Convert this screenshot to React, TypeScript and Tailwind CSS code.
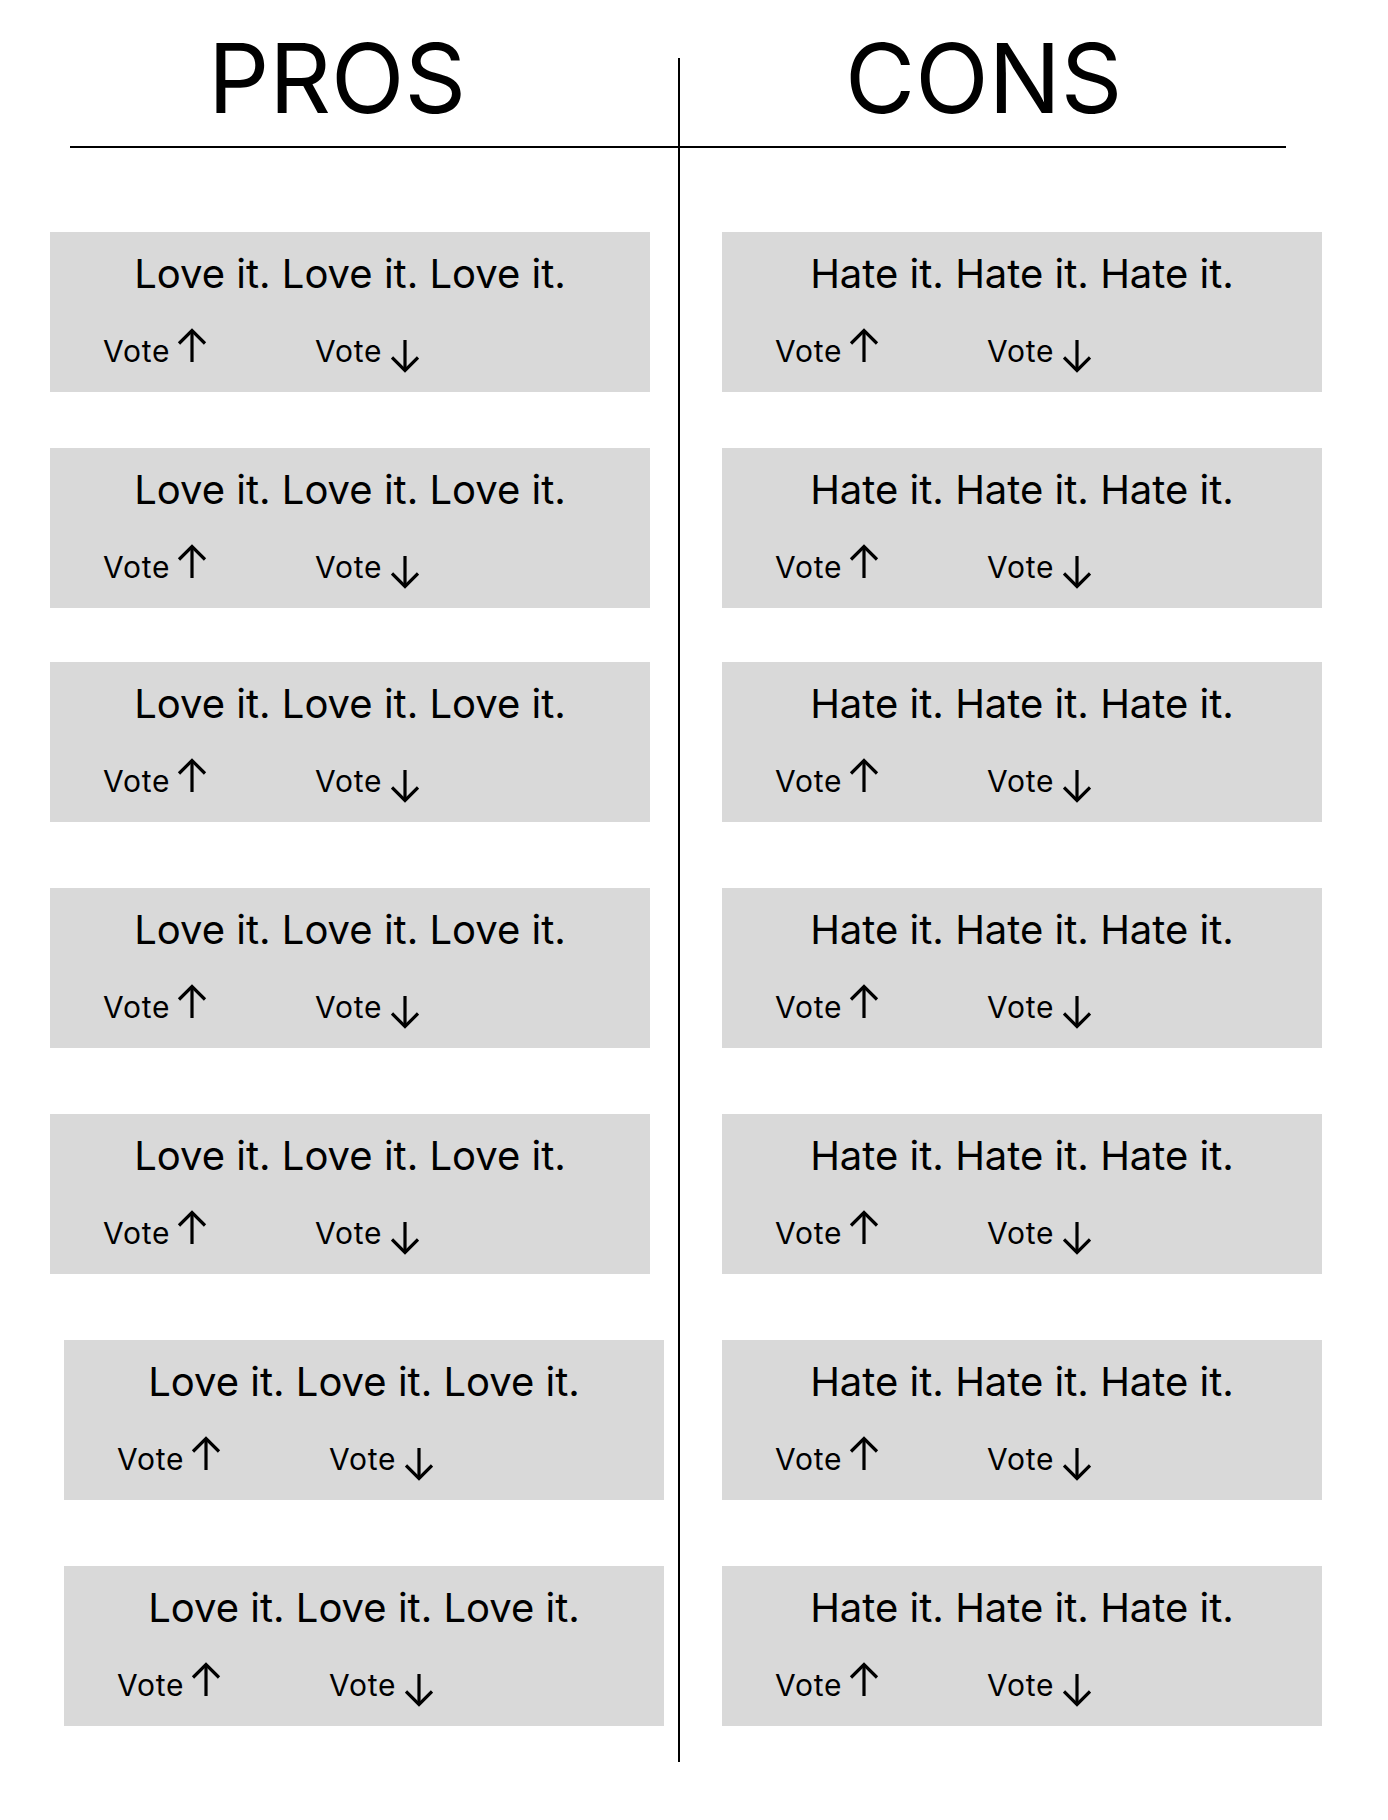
import React from "react";

const gaps = ["mt-[84px]", "mt-[56px]", "mt-[54px]", "mt-[66px]", "mt-[66px]", "mt-[66px]", "mt-[66px]"];

function UpArrow() {
  return (
    <svg width="30" height="34" viewBox="0 0 30 34" fill="none" stroke="black" strokeWidth={3.2} className="ml-[7px] -mt-[8px] shrink-0">
      <path d="M15 34V2.5" />
      <path d="M2 15.5L15 2.5L28 15.5" />
    </svg>
  );
}

function DownArrow() {
  return (
    <svg width="28" height="33" viewBox="0 0 28 33" fill="none" stroke="black" strokeWidth={3.2} className="ml-[9px] mt-[4px] shrink-0">
      <path d="M14 0V30.5" />
      <path d="M1 17.5L14 30.5L27 17.5" />
    </svg>
  );
}

function Card({ text, className }: { text: string; className: string }) {
  return (
    <div className={`w-[600px] h-[160px] bg-[#d9d9d9] ${className}`}>
      <p className="pt-[22px] text-center text-[40px] leading-none">{text}</p>
      <div className="flex items-start mt-[42px] pl-[53px] text-[30px] leading-none tracking-[0.025em]">
        <div className="flex items-start w-[212px]">
          <span>Vote</span>
          <UpArrow />
        </div>
        <div className="flex items-start">
          <span>Vote</span>
          <DownArrow />
        </div>
      </div>
    </div>
  );
}

export default function App() {
  return (
    <div className="w-[1388px] min-h-[1820px] bg-white text-black font-['Inter',sans-serif] flex">
      {/* Pros column */}
      <div className="w-[678px]">
        <div className="h-[146px] pt-[30px]">
          <h1 className="pl-[208px] text-[96px] leading-none font-normal">PROS</h1>
        </div>
        <div className="ml-[70px] h-[2px] bg-black" />
        {gaps.map((g, i) => (
          <Card key={i} text="Love it. Love it. Love it." className={`${g} ${i >= 5 ? "ml-[64px]" : "ml-[50px]"}`} />
        ))}
      </div>

      {/* Divider */}
      <div className="w-[2px] h-[1704px] mt-[58px] bg-black" />

      {/* Cons column */}
      <div className="flex-1">
        <div className="h-[146px] pt-[30px]">
          <h1 className="pl-[165px] text-[96px] leading-none font-normal">CONS</h1>
        </div>
        <div className="w-[606px] h-[2px] bg-black" />
        {gaps.map((g, i) => (
          <Card key={i} text="Hate it. Hate it. Hate it." className={`${g} ml-[42px]`} />
        ))}
      </div>
    </div>
  );
}
